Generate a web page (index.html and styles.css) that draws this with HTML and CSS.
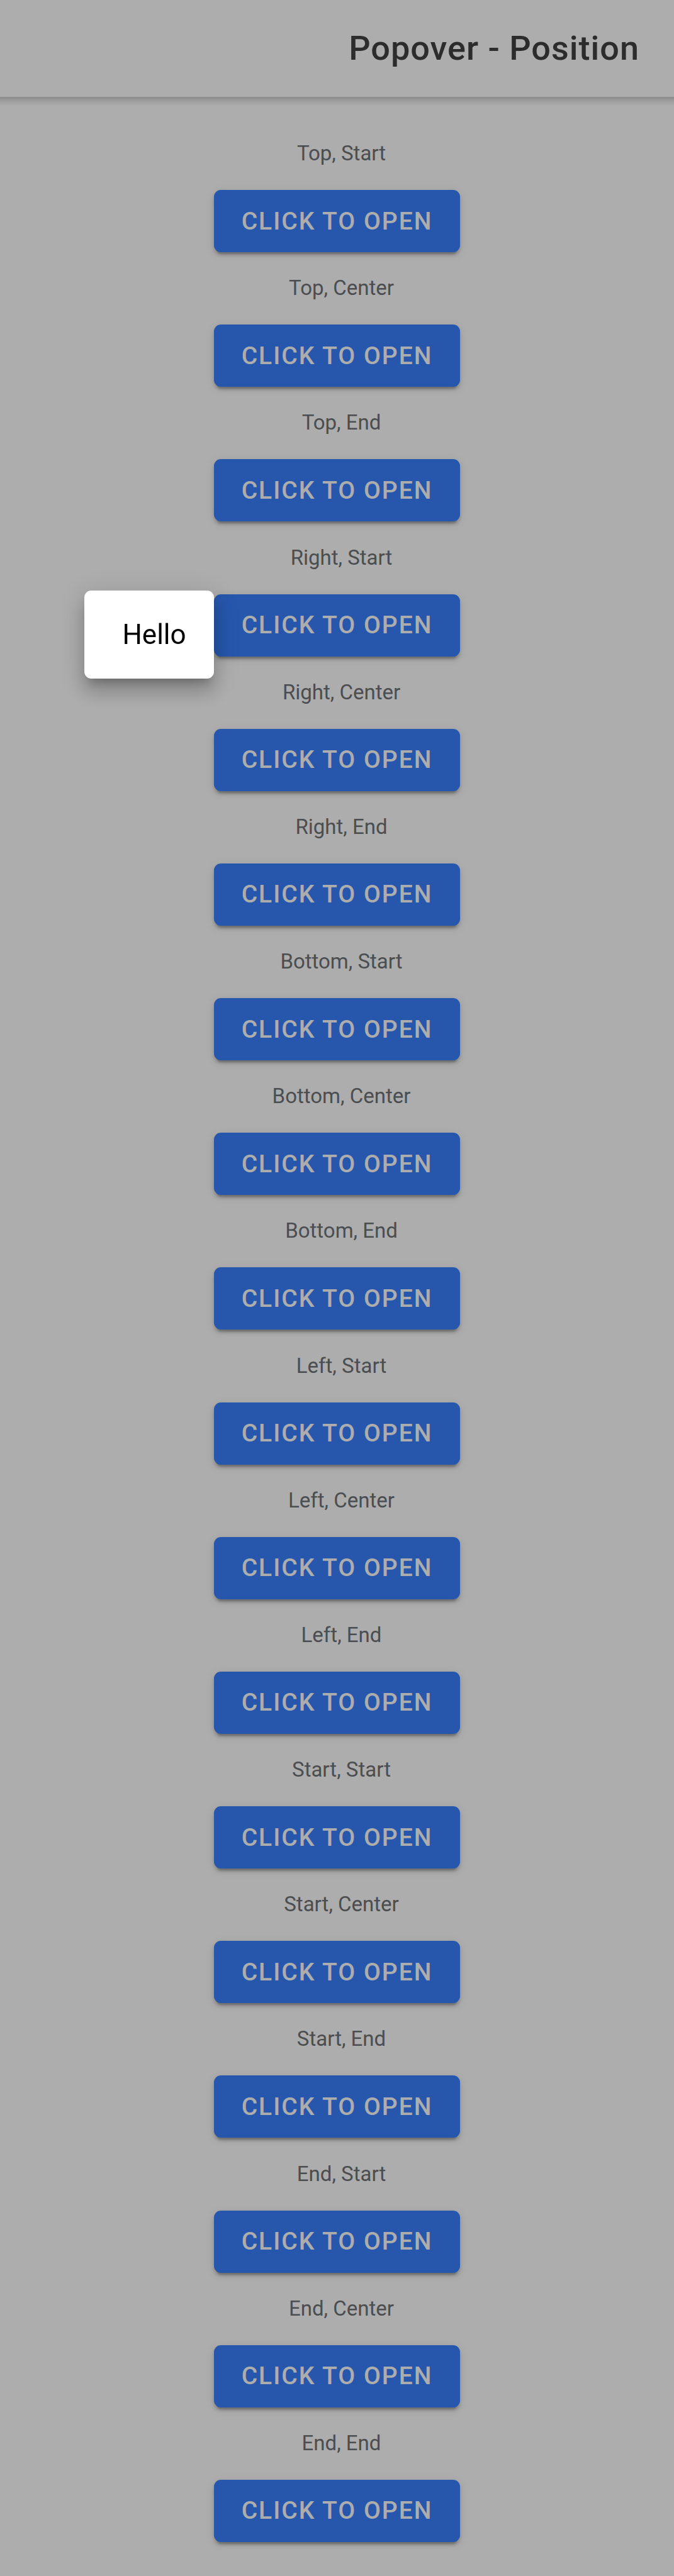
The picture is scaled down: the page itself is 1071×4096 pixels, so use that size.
FILE: index.html
```html
<!DOCTYPE html>
<html lang="en" dir="rtl">
<head>
<meta charset="utf-8">
<meta name="viewport" content="width=device-width, initial-scale=1">
<title>Popover - Position</title>
<link rel="stylesheet" href="styles.css">
</head>
<body>
<header class="toolbar"><h1 class="title">Popover - Position</h1></header>
<main class="grid">
  <section class="item"><h2 class="label" id="l1">Top, Start</h2><div class="anchor"><button class="button" type="button" aria-describedby="l1">CLICK TO OPEN</button></div></section>
  <section class="item"><h2 class="label" id="l2">Top, Center</h2><div class="anchor"><button class="button" type="button" aria-describedby="l2">CLICK TO OPEN</button></div></section>
  <section class="item"><h2 class="label" id="l3">Top, End</h2><div class="anchor"><button class="button" type="button" aria-describedby="l3">CLICK TO OPEN</button></div></section>
  <section class="item"><h2 class="label" id="l4">Right, Start</h2><div class="anchor"><button class="button" type="button" aria-describedby="l4">CLICK TO OPEN</button><div class="popover" role="dialog">Hello</div></div></section>
  <section class="item"><h2 class="label" id="l5">Right, Center</h2><div class="anchor"><button class="button" type="button" aria-describedby="l5">CLICK TO OPEN</button></div></section>
  <section class="item"><h2 class="label" id="l6">Right, End</h2><div class="anchor"><button class="button" type="button" aria-describedby="l6">CLICK TO OPEN</button></div></section>
  <section class="item"><h2 class="label" id="l7">Bottom, Start</h2><div class="anchor"><button class="button" type="button" aria-describedby="l7">CLICK TO OPEN</button></div></section>
  <section class="item"><h2 class="label" id="l8">Bottom, Center</h2><div class="anchor"><button class="button" type="button" aria-describedby="l8">CLICK TO OPEN</button></div></section>
  <section class="item"><h2 class="label" id="l9">Bottom, End</h2><div class="anchor"><button class="button" type="button" aria-describedby="l9">CLICK TO OPEN</button></div></section>
  <section class="item"><h2 class="label" id="l10">Left, Start</h2><div class="anchor"><button class="button" type="button" aria-describedby="l10">CLICK TO OPEN</button></div></section>
  <section class="item"><h2 class="label" id="l11">Left, Center</h2><div class="anchor"><button class="button" type="button" aria-describedby="l11">CLICK TO OPEN</button></div></section>
  <section class="item"><h2 class="label" id="l12">Left, End</h2><div class="anchor"><button class="button" type="button" aria-describedby="l12">CLICK TO OPEN</button></div></section>
  <section class="item"><h2 class="label" id="l13">Start, Start</h2><div class="anchor"><button class="button" type="button" aria-describedby="l13">CLICK TO OPEN</button></div></section>
  <section class="item"><h2 class="label" id="l14">Start, Center</h2><div class="anchor"><button class="button" type="button" aria-describedby="l14">CLICK TO OPEN</button></div></section>
  <section class="item"><h2 class="label" id="l15">Start, End</h2><div class="anchor"><button class="button" type="button" aria-describedby="l15">CLICK TO OPEN</button></div></section>
  <section class="item"><h2 class="label" id="l16">End, Start</h2><div class="anchor"><button class="button" type="button" aria-describedby="l16">CLICK TO OPEN</button></div></section>
  <section class="item"><h2 class="label" id="l17">End, Center</h2><div class="anchor"><button class="button" type="button" aria-describedby="l17">CLICK TO OPEN</button></div></section>
  <section class="item"><h2 class="label" id="l18">End, End</h2><div class="anchor"><button class="button" type="button" aria-describedby="l18">CLICK TO OPEN</button></div></section>
</main>
<div class="backdrop"></div>
</body>
</html>
```

FILE: styles.css
```css
* {
  box-sizing: border-box;
}

body {
  display: flex;
  flex-direction: column;
  min-height: 100vh;
  margin: 0;
  background: #fff;
  font-family: Roboto, "Liberation Sans", sans-serif;
}

.toolbar {
  display: flex;
  align-items: center;
  min-height: 154px;
  padding: 0 55px;
}

.title {
  margin: 0;
  color: #424242;
  font-size: 54px;
  font-weight: 500;
  line-height: 64px;
  letter-spacing: 1px;
}

/* The strip at the top of the content is the toolbar's shadow. */
.grid {
  display: flex;
  flex: 1;
  flex-direction: column;
  align-items: center;
  justify-content: space-between;
  gap: 36px;
  padding: 70px 0 54px;
  background: linear-gradient(rgba(0, 0, 0, 0.2), rgba(0, 0, 0, 0.08) 50%, rgba(0, 0, 0, 0)) top / 100% 15px no-repeat;
}

.item {
  display: flex;
  flex-direction: column;
  align-items: center;
  gap: 38px;
}

.label {
  margin: 0;
  padding-left: 14px;
  color: #6f7378;
  font-size: 33px;
  font-weight: 400;
  line-height: 40px;
}

.anchor {
  position: relative;
}

.button {
  display: block;
  height: 99px;
  padding: 0 44px;
  border: 0;
  border-radius: 11px;
  background: #3880ff;
  box-shadow: 0 8px 3px -5px rgba(0, 0, 0, 0.2), 0 5px 5px rgba(0, 0, 0, 0.14), 0 3px 14px rgba(0, 0, 0, 0.12);
  color: #fff;
  font-family: inherit;
  font-size: 39px;
  font-weight: 500;
  letter-spacing: 2px;
  white-space: nowrap;
}

.backdrop {
  position: fixed;
  inset: 0;
  z-index: 10;
  background: rgba(0, 0, 0, 0.32);
}

.popover {
  position: absolute;
  top: -6px;
  right: 100%;
  z-index: 20;
  min-width: 206px;
  padding: 44px;
  border-radius: 11px;
  background: #fff;
  box-shadow: 0 14px 14px -8px rgba(0, 0, 0, 0.2), 0 22px 28px 3px rgba(0, 0, 0, 0.14), 0 8px 38px 5px rgba(0, 0, 0, 0.12);
  color: #000;
  font-size: 44px;
  line-height: 52px;
}
```
